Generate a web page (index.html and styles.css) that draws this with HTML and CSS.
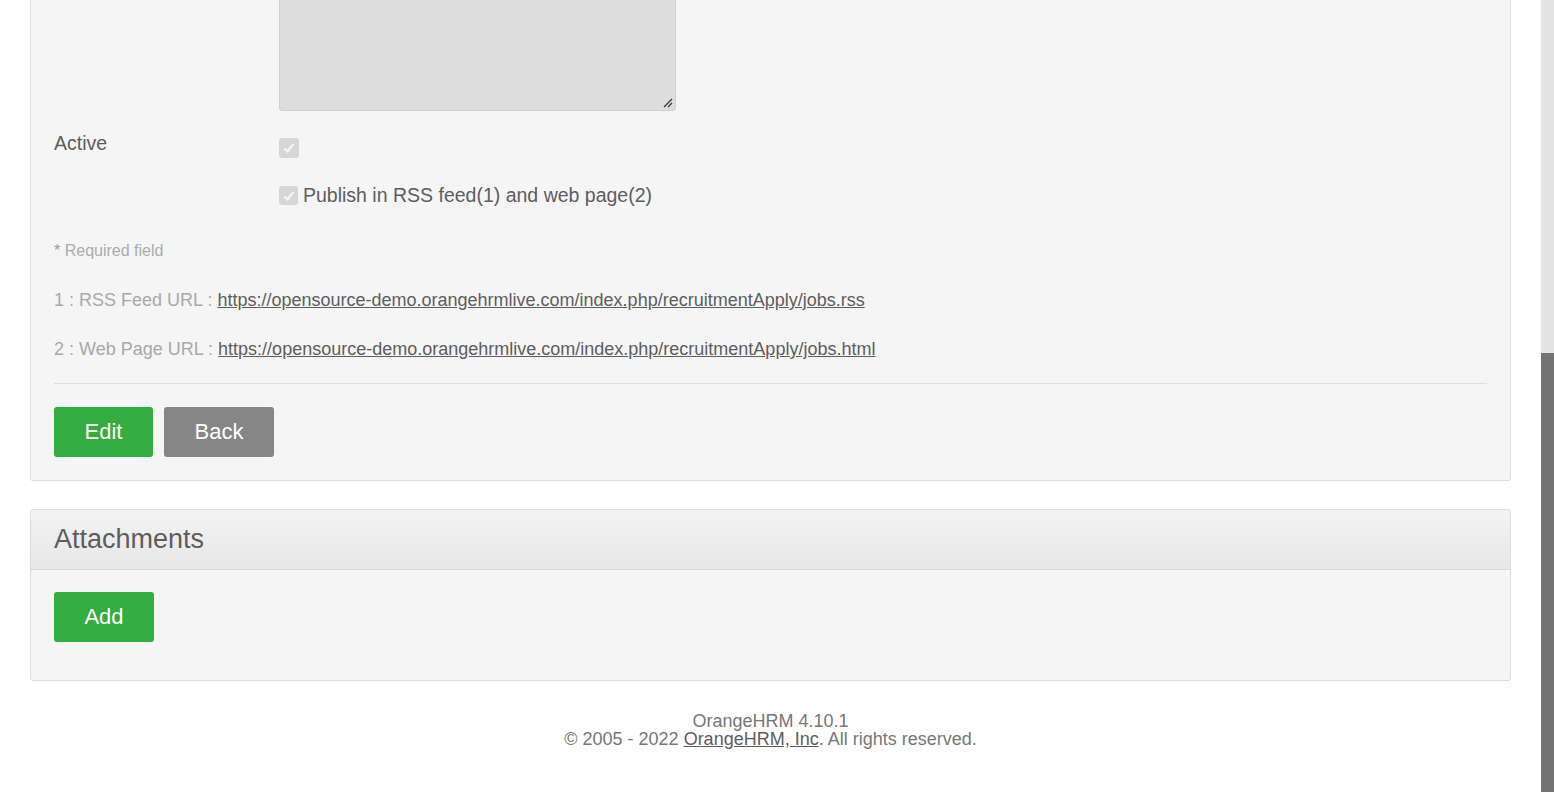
FILE: index.html
```html
<!DOCTYPE html>
<html>
<head>
<meta charset="utf-8">
<link rel="stylesheet" href="styles.css">
</head>
<body>
<div class="viewport">
  <div class="page">
    <div class="panel panel-top">
      <div class="inner">
        <div class="row row-textarea">
          <div class="label"></div>
          <div class="field"><div class="textarea"><svg class="grip" width="12" height="12" viewBox="0 0 12 12"><path d="M11 3 L3 11 M11 7 L7 11" stroke="#333" stroke-width="1.2" fill="none"/></svg></div></div>
        </div>
        <div class="row row-active">
          <div class="label">Active</div>
          <div class="field"><span class="cb"><svg width="14" height="14" viewBox="0 0 14 14"><path d="M2.5 7.5 L5.5 10.5 L11.5 3" stroke="#f3f3f3" stroke-width="2.5" fill="none"/></svg></span></div>
        </div>
        <div class="row row-publish">
          <div class="label"></div>
          <div class="field publish"><span class="cb cb-small"><svg width="14" height="14" viewBox="0 0 14 14"><path d="M2.5 7.5 L5.5 10.5 L11.5 3" stroke="#f3f3f3" stroke-width="2.5" fill="none"/></svg></span><span>Publish in RSS feed(1) and web page(2)</span></div>
        </div>
        <p class="required"><span class="star">*</span> Required field</p>
        <p class="url">1 : RSS Feed URL : <a href="#">https://opensource-demo.orangehrmlive.com/index.php/recruitmentApply/jobs.rss</a></p>
        <p class="url">2 : Web Page URL : <a href="#">https://opensource-demo.orangehrmlive.com/index.php/recruitmentApply/jobs.html</a></p>
        <div class="divider"></div>
        <div class="actions">
          <button class="btn btn-green btn-edit">Edit</button>
          <button class="btn btn-gray">Back</button>
        </div>
      </div>
    </div>

    <div class="panel panel-attach">
      <div class="head"><h2>Attachments</h2></div>
      <div class="inner inner-attach">
        <button class="btn btn-green btn-add">Add</button>
      </div>
    </div>

    <div class="footer">
      <div>OrangeHRM 4.10.1</div>
      <div>© 2005 - 2022 <a href="#">OrangeHRM, Inc</a>. All rights reserved.</div>
    </div>
  </div>
  <div class="scrollbar">
    <div class="track"></div>
    <div class="thumb"></div>
  </div>
</div>
</body>
</html>
```
FILE: styles.css
```css
* { box-sizing: border-box; }
html, body { margin: 0; padding: 0; }
body {
  font-family: "Liberation Sans", Arial, sans-serif;
  color: #5d5d5d;
  background: #fff;
}
.viewport {
  display: flex;
  height: 792px;
  overflow: hidden;
}
.page {
  width: 1541px;
  padding: 0 30px;
  background: #fff;
}
.scrollbar {
  width: 13px;
  display: flex;
  flex-direction: column;
}
.track { height: 353px; background: #e3e3e3; }
.thumb { flex: 1; background: #737373; }

.panel {
  background: #f5f5f5;
  border: 1px solid #dedede;
  border-radius: 3px;
}
.panel-top {
  border-top: none;
  border-top-left-radius: 0;
  border-top-right-radius: 0;
}
.inner { padding: 0 23px 23px 23px; }
.row { display: flex; }
.label { width: 225px; flex: none; font-size: 19.5px; }
.textarea {
  position: relative;
  width: 397px;
  height: 111px;
  background: #dddddd;
  border: 1px solid #cfcfcf;
  border-top: none;
  border-radius: 0 0 4px 4px;
}
.grip { position: absolute; right: 2px; bottom: 2px; }
.row-active { margin-top: 20px; height: 37px; }
.row-active .label { padding-top: 1px; }
.row-active .field { padding-top: 7px; }
.cb {
  display: inline-flex;
  align-items: center;
  justify-content: center;
  width: 20px;
  height: 20px;
  background: #d6d6d6;
  border-radius: 3px;
}
.cb-small { width: 19px; height: 19px; }
.row-publish { margin-top: 16px; }
.publish {
  display: flex;
  align-items: center;
  gap: 5px;
  font-size: 19.5px;
}
.required {
  margin: 35px 0 0;
  font-size: 16px;
  color: #ababab;
}
.star { color: #999; }
.url {
  margin: 30px 0 0;
  font-size: 18px;
  color: #a8a8a8;
}
.url + .url { margin-top: 28px; }
.url a { color: #5d5d5d; text-decoration: underline; }
.divider {
  height: 1px;
  background: #dedede;
  margin-top: 23px;
}
.actions {
  display: flex;
  gap: 11px;
  margin-top: 23px;
}
.btn {
  font-family: "Liberation Sans", Arial, sans-serif;
  border: none;
  border-radius: 3px;
  color: #fff;
  font-size: 22px;
  height: 50px;
  padding: 0;
}
.btn-green { background: #33ac40; }
.btn-gray { background: #868686; width: 110px; }
.btn-edit { width: 99px; }
.btn-add { width: 100px; }

.panel-attach { margin-top: 28px; }
.head {
  height: 60px;
  background: linear-gradient(#f3f3f3, #e7e7e7);
  border-bottom: 1px solid #d8d8d8;
  border-radius: 3px 3px 0 0;
  display: flex;
  align-items: center;
  padding: 0 23px;
}
.head h2 {
  margin: 0;
  font-weight: normal;
  font-size: 27px;
  color: #5d5d5d;
}
.inner-attach { padding-top: 22px; padding-bottom: 38px; }

.footer {
  text-align: center;
  font-size: 18px;
  color: #777;
  margin-top: 31px;
  line-height: 18px;
}
.footer a { color: #5d5d5d; text-decoration: underline; }
```
